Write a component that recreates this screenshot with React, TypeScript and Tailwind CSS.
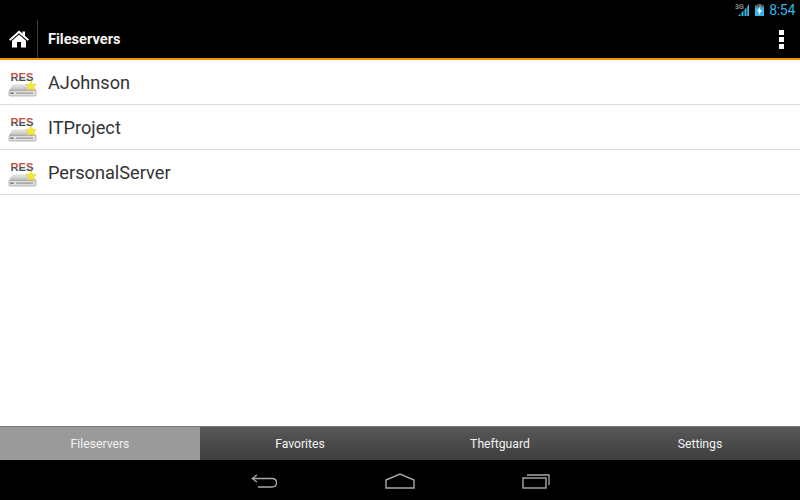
import React from 'react';

const servers = ['AJohnson', 'ITProject', 'PersonalServer'];
const tabs = ['Fileservers', 'Favorites', 'Theftguard', 'Settings'];

const ServerIcon = () => (
  <svg width="30" height="30" viewBox="0 0 30 30" className="shrink-0">
    <defs>
      <linearGradient id="resTop" x1="0" y1="0" x2="0" y2="1">
        <stop offset="0" stopColor="#d8402f" />
        <stop offset="0.48" stopColor="#c4574a" />
        <stop offset="0.52" stopColor="#5a5a5a" />
        <stop offset="1" stopColor="#444444" />
      </linearGradient>
      <linearGradient id="box" x1="0" y1="0" x2="0" y2="1">
        <stop offset="0" stopColor="#ececec" />
        <stop offset="1" stopColor="#b4b4b4" />
      </linearGradient>
    </defs>
    <text x="3.5" y="13.5" fontFamily="Liberation Sans, sans-serif" fontSize="11.5" fontWeight="700" fill="url(#resTop)" textLength="23" lengthAdjust="spacingAndGlyphs">RES</text>
    <path d="M6 18 L25 18 L29 23.5 L2 23.5 Z" fill="url(#box)" stroke="#bdbdbd" strokeWidth="0.5" />
    <rect x="2" y="23.5" width="27" height="5.5" rx="1.2" fill="#dedede" stroke="#8f8f8f" strokeWidth="0.6" />
    <rect x="9" y="25.6" width="17" height="1" fill="#8a8a8a" />
    <rect x="3.5" y="25.5" width="3" height="1.4" fill="#666666" />
    <path d="M24 13.5 L25.5 17.2 L29.5 17.5 L26.5 20 L27.5 24 L24 21.9 L20.5 24 L21.5 20 L18.5 17.5 L22.5 17.2 Z" fill="#f7e92f" stroke="#d8c53a" strokeWidth="0.4" />
  </svg>
);

export default function App() {
  return (
    <div className="flex h-[500px] w-[800px] flex-col overflow-hidden bg-white font-['Roboto',sans-serif]">
      {/* status bar */}
      <div className="flex h-5 items-center justify-end bg-black pr-[5px]">
        <svg width="15" height="14" viewBox="0 0 15 14" className="mr-[5px]">
          <path d="M3 13 L5.5 13 L5.5 10.5 Z M6.5 13 L8.5 13 L8.5 7.5 L6.5 9.5 Z M9.5 13 L11.5 13 L11.5 4.5 L9.5 6.5 Z" fill="#33b5e5" />
          <path d="M12.2 13 L14 13 L14 1 L12.2 3.5 Z" fill="#33b5e5" />
          <text x="0" y="6" fontFamily="Roboto, sans-serif" fontSize="7" fontWeight="700" fill="#8a8a8a">3G</text>
        </svg>
        <svg width="9" height="12" viewBox="0 0 9 12" className="mr-[5px]">
          <rect x="2.5" y="0" width="4" height="1.5" fill="#666666" />
          <rect x="0" y="1.5" width="9" height="10.5" fill="#33b5e5" />
          <rect x="0" y="1.5" width="9" height="2" fill="#666666" />
          <path d="M5.5 2 L2 7.5 L4.2 7.5 L3.5 11.5 L7 6 L4.8 6 Z" fill="#ffffff" />
        </svg>
        <span className="text-[14px] leading-5 tracking-[-0.3px] text-[#33b5e5]">8:54</span>
      </div>

      {/* action bar */}
      <div className="flex h-10 items-center border-b-2 border-[#f39200] bg-black">
        <div className="flex w-[37px] items-center justify-center">
          <svg width="20" height="18" viewBox="0 0 20 18">
            <path d="M10 0.5 L13.5 3.6 L13.5 1.5 L16 1.5 L16 5.8 L20 9.4 L18.6 10.8 L10 3.2 L1.4 10.8 L0 9.4 Z" fill="#ffffff" />
            <path d="M10 4.6 L17 10.8 L17 17.5 L12 17.5 L12 12 L8 12 L8 17.5 L3 17.5 L3 10.8 Z" fill="#ffffff" />
          </svg>
        </div>
        <div className="h-[38px] w-px self-start bg-[#3a3a3a]" />
        <span className="ml-[10px] mt-[1px] flex-1 text-[14.6px] font-bold text-[#f4f4f4]">Fileservers</span>
        <div className="mr-[16px] flex flex-col gap-[2px]">
          <div className="h-[5px] w-[5px] bg-white" />
          <div className="h-[5px] w-[5px] bg-white" />
          <div className="h-[5px] w-[5px] bg-white" />
        </div>
      </div>

      {/* server list */}
      <div className="flex-1">
        {servers.map((name) => (
          <div key={name} className="flex h-[45px] items-center border-b border-[#dcdcdc] pl-[7px]">
            <ServerIcon />
            <span className="ml-[11px] mt-[2px] text-[18.2px] text-[#333333]">{name}</span>
          </div>
        ))}
      </div>

      {/* tabs */}
      <div className="grid h-[34px] grid-cols-4 border-t border-[#7a7a7a] bg-gradient-to-b from-[#585858] to-[#3e3e3e]">
        {tabs.map((tab, i) => (
          <div
            key={tab}
            className={i === 0
              ? 'flex items-center justify-center bg-[#9a9a9a] pt-[2px] text-[12.2px] text-[#f2f2f2]'
              : 'flex items-center justify-center pt-[2px] text-[12.2px] text-[#f2f2f2]'}
          >
            {tab}
          </div>
        ))}
      </div>

      {/* nav bar */}
      <div className="flex h-10 items-center bg-black pl-[251px] pt-[2px]">
        <svg width="28" height="16" viewBox="0 0 28 16">
          <path d="M6 2 L1 5.5 L6 9 M1 5.5 L21 5.5 C27 5.5 27 14 21 14 L7 14" fill="none" stroke="#a8a8a8" strokeWidth="1.3" />
        </svg>
        <svg width="30" height="16" viewBox="0 0 30 16" className="ml-[106px]">
          <path d="M1 7 L15 1 L29 7 L29 15 L1 15 Z" fill="none" stroke="#a8a8a8" strokeWidth="1.4" />
        </svg>
        <svg width="28" height="16" viewBox="0 0 28 16" className="ml-[107px]">
          <rect x="1" y="5" width="23" height="10" fill="none" stroke="#a8a8a8" strokeWidth="1.4" />
          <path d="M5 2 L27 2 L27 12" fill="none" stroke="#a8a8a8" strokeWidth="1.3" />
        </svg>
      </div>
    </div>
  );
}
